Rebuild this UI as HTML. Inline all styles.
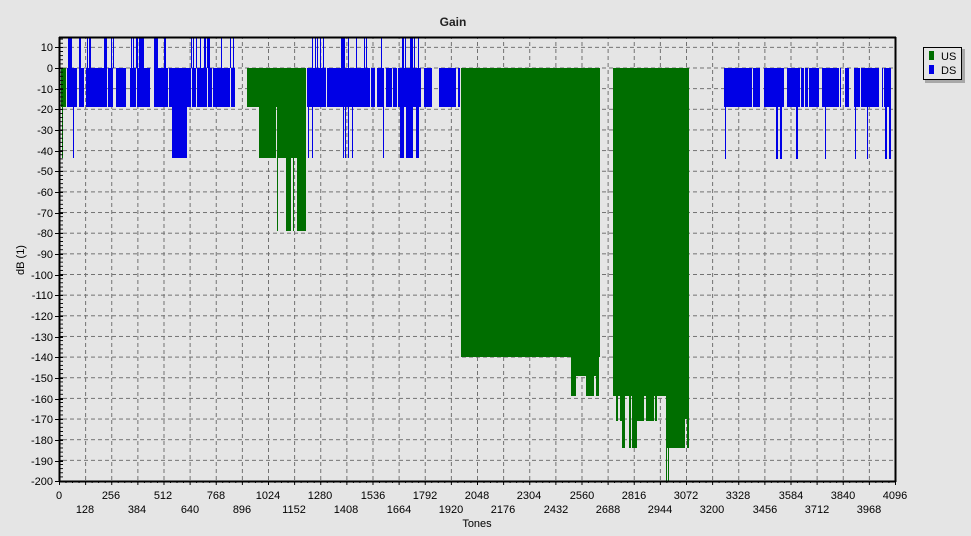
<!DOCTYPE html>
<html><head><meta charset="utf-8"><style>
html,body{margin:0;padding:0;background:#e5e5e5;width:971px;height:536px;overflow:hidden}
svg text{font-family:"Liberation Sans",sans-serif;font-size:11px;fill:#000}
</style></head><body>
<svg width="971" height="536" viewBox="0 0 971 536" xmlns="http://www.w3.org/2000/svg" shape-rendering="crispEdges">
<defs>
<pattern id="vg" x="59" y="0" width="26.125" height="536" patternUnits="userSpaceOnUse">
<line x1="0.5" y1="0" x2="0.5" y2="536" stroke="#707070" stroke-dasharray="4,3"/></pattern>
<pattern id="hg" x="0" y="-0.35" width="971" height="20.65" patternUnits="userSpaceOnUse">
<line x1="0" y1="6.5" x2="971" y2="6.5" stroke="#707070" stroke-dasharray="4,3"/></pattern>
<pattern id="xt" x="59" y="0" width="6.531" height="10" patternUnits="userSpaceOnUse">
<line x1="0.5" y1="0" x2="0.5" y2="3" stroke="#000"/></pattern>
<pattern id="xT" x="59" y="0" width="26.125" height="10" patternUnits="userSpaceOnUse">
<line x1="0.5" y1="0" x2="0.5" y2="5" stroke="#000"/></pattern>
<pattern id="yt" x="0" y="-0.35" width="10" height="4.13" patternUnits="userSpaceOnUse">
<line x1="0" y1="2.3" x2="3" y2="2.3" stroke="#000"/></pattern>
</defs>
<text x="453" y="26" text-anchor="middle" style="font-weight:bold;font-size:12px;fill:#222">Gain</text>
<rect x="60" y="38" width="835" height="443" fill="url(#vg)"/>
<rect x="60" y="38" width="835" height="443" fill="url(#hg)"/>
<g fill="#0000e6">
<!-- left blue bars -->
<rect x="67" y="68" width="10" height="39"/><rect x="79" y="68" width="5" height="39"/><rect x="86" y="68" width="3" height="39"/>
<rect x="89" y="68" width="18" height="39"/><rect x="108" y="68" width="5" height="39"/><rect x="116" y="68" width="10" height="39"/>
<rect x="130" y="68" width="6" height="39"/><rect x="137" y="68" width="13" height="39"/><rect x="154" y="68" width="14" height="39"/>
<rect x="169" y="68" width="18" height="39"/><rect x="187" y="68" width="4" height="39"/><rect x="192" y="68" width="4" height="39"/>
<rect x="197" y="68" width="10" height="39"/><rect x="208" y="68" width="4" height="39"/><rect x="213" y="68" width="17" height="39"/><rect x="231" y="68" width="4" height="39"/>
<rect x="172" y="107" width="15" height="51"/><rect x="73" y="107" width="1" height="51"/>
<!-- left spikes -->
<rect x="68" y="38" width="2" height="30"/><rect x="70" y="38" width="2" height="30"/><rect x="79" y="38" width="2" height="30"/>
<rect x="87" y="38" width="1" height="30"/><rect x="89" y="38" width="2" height="30"/><rect x="104" y="38" width="3" height="30"/>
<rect x="111" y="38" width="1" height="30"/><rect x="113" y="38" width="1" height="30"/><rect x="131" y="38" width="1" height="30"/><rect x="133" y="38" width="1" height="30"/>
<rect x="136" y="38" width="2" height="30"/><rect x="139" y="38" width="5" height="30"/><rect x="154" y="38" width="4" height="30"/>
<rect x="164" y="38" width="2" height="30"/><rect x="191" y="38" width="1" height="30"/><rect x="193" y="38" width="1" height="30"/>
<rect x="196" y="38" width="1" height="30"/><rect x="200" y="38" width="1" height="30"/><rect x="204" y="38" width="2" height="30"/><rect x="207" y="38" width="3" height="30"/>
<rect x="221" y="38" width="1" height="30"/><rect x="230" y="38" width="1" height="30"/><rect x="233" y="38" width="1" height="30"/>
<!-- middle blue -->
<rect x="307" y="68" width="19" height="39"/><rect x="327" y="68" width="43" height="39"/><rect x="371" y="68" width="4" height="39"/>
<rect x="377" y="68" width="7" height="39"/><rect x="386" y="68" width="6" height="39"/><rect x="393" y="68" width="4" height="39"/>
<rect x="398" y="68" width="23" height="39"/><rect x="424" y="68" width="8" height="39"/><rect x="439" y="68" width="17" height="39"/><rect x="458" y="68" width="2" height="39"/>
<rect x="312" y="38" width="1" height="30"/><rect x="315" y="38" width="1" height="30"/><rect x="317" y="38" width="1" height="30"/>
<rect x="320" y="38" width="1" height="30"/><rect x="323" y="38" width="1" height="30"/><rect x="341" y="38" width="4" height="30"/>
<rect x="348" y="38" width="1" height="30"/><rect x="356" y="38" width="1" height="30"/><rect x="364" y="38" width="1" height="30"/><rect x="366" y="38" width="1" height="30"/>
<rect x="381" y="38" width="1" height="30"/><rect x="402" y="38" width="2" height="30"/><rect x="405" y="38" width="1" height="30"/>
<rect x="410" y="38" width="3" height="30"/><rect x="414" y="38" width="1" height="30"/><rect x="418" y="38" width="1" height="30"/>
<rect x="308" y="107" width="1" height="51"/><rect x="312" y="107" width="1" height="51"/><rect x="343" y="107" width="1" height="51"/>
<rect x="345" y="107" width="1" height="51"/><rect x="348" y="107" width="1" height="51"/><rect x="352" y="107" width="1" height="51"/>
<rect x="383" y="107" width="1" height="51"/><rect x="400" y="107" width="4" height="51"/><rect x="406" y="107" width="7" height="51"/><rect x="416" y="107" width="3" height="51"/>
<!-- right blue -->
<rect x="724" y="68" width="28" height="39"/><rect x="753" y="68" width="7" height="39"/><rect x="764" y="68" width="20" height="39"/>
<rect x="787" y="68" width="13" height="39"/><rect x="801" y="68" width="3" height="39"/><rect x="805" y="68" width="3" height="39"/>
<rect x="809" y="68" width="10" height="39"/><rect x="822" y="68" width="17" height="39"/><rect x="840" y="68" width="1" height="39"/>
<rect x="845" y="68" width="4" height="39"/><rect x="854" y="68" width="6" height="39"/><rect x="861" y="68" width="18" height="39"/>
<rect x="882" y="68" width="1" height="39"/><rect x="884" y="68" width="7" height="39"/>
<rect x="725" y="107" width="1" height="52"/><rect x="776" y="107" width="2" height="52"/><rect x="780" y="107" width="2" height="52"/>
<rect x="796" y="107" width="2" height="52"/><rect x="825" y="107" width="1" height="52"/><rect x="855" y="107" width="1" height="52"/>
<rect x="867" y="107" width="1" height="52"/><rect x="885" y="107" width="2" height="52"/><rect x="889" y="107" width="2" height="52"/>
</g>
<g fill="#006e00">
<rect x="61" y="68" width="5" height="39"/><rect x="62" y="107" width="1" height="51"/>
<rect x="247" y="68" width="59" height="39"/><rect x="259" y="107" width="17" height="51"/><rect x="277" y="107" width="29" height="51"/>
<rect x="277" y="158" width="1" height="73"/><rect x="286" y="158" width="5" height="73"/><rect x="293" y="158" width="1" height="73"/><rect x="297" y="158" width="9" height="73"/>
<rect x="461" y="68" width="139" height="289"/><rect x="571" y="357" width="28" height="19"/>
<rect x="571" y="376" width="5" height="20"/><rect x="586" y="376" width="8" height="20"/><rect x="596" y="376" width="3" height="20"/>
<rect x="613" y="68" width="76" height="289"/><rect x="613" y="357" width="76" height="39"/>
<rect x="616" y="396" width="2" height="25"/><rect x="620" y="396" width="5" height="25"/><rect x="622" y="421" width="3" height="27"/>
<rect x="629" y="396" width="2" height="52"/><rect x="632" y="396" width="12" height="25"/><rect x="632" y="421" width="5" height="27"/>
<rect x="646" y="396" width="8" height="25"/><rect x="655" y="396" width="2" height="25"/><rect x="666" y="396" width="23" height="23"/>
<rect x="666" y="396" width="19" height="52"/><rect x="666" y="448" width="1" height="33"/><rect x="668" y="448" width="1" height="33"/><rect x="687" y="419" width="2" height="29"/>
</g>
<!-- ticks -->
<rect x="60" y="481" width="835" height="4" fill="url(#xt)"/>
<rect x="59" y="481" width="837" height="6" fill="url(#xT)"/>
<rect x="60" y="38" width="4" height="443" fill="url(#yt)"/>
<g stroke="#000">
<path d="M55 47.5H63M55 68.5H63M55 89.5H63M55 109.5H63M55 130.5H63M55 151.5H63M55 171.5H63M55 192.5H63M55 213.5H63M55 233.5H63M55 254.5H63M55 275.5H63M55 295.5H63M55 316.5H63M55 337.5H63M55 357.5H63M55 378.5H63M55 399.5H63M55 419.5H63M55 440.5H63M55 461.5H63M55 481.5H63"/>
<rect x="59.5" y="37.5" width="836" height="444" fill="none" stroke-width="1"/>
<line x1="59" y1="37.5" x2="896" y2="37.5" stroke-width="2"/>
<line x1="59.5" y1="37" x2="59.5" y2="482" stroke-width="2"/>
<line x1="59" y1="481.5" x2="896" y2="481.5" stroke-width="2"/>
<line x1="895.5" y1="37" x2="895.5" y2="482" stroke-width="2"/>
</g>
<g text-anchor="end">
<text x="53" y="51">10</text><text x="53" y="72">0</text><text x="53" y="93">-10</text><text x="53" y="113">-20</text><text x="53" y="134">-30</text><text x="53" y="155">-40</text><text x="53" y="175">-50</text><text x="53" y="196">-60</text><text x="53" y="217">-70</text><text x="53" y="237">-80</text><text x="53" y="258">-90</text><text x="53" y="279">-100</text><text x="53" y="299">-110</text><text x="53" y="320">-120</text><text x="53" y="341">-130</text><text x="53" y="361">-140</text><text x="53" y="382">-150</text><text x="53" y="403">-160</text><text x="53" y="423">-170</text><text x="53" y="444">-180</text><text x="53" y="465">-190</text><text x="53" y="485">-200</text>
</g>
<g text-anchor="middle">
<text x="59" y="499">0</text><text x="111" y="499">256</text><text x="163" y="499">512</text><text x="216" y="499">768</text><text x="268" y="499">1024</text><text x="320" y="499">1280</text><text x="373" y="499">1536</text><text x="425" y="499">1792</text><text x="477" y="499">2048</text><text x="529" y="499">2304</text><text x="582" y="499">2560</text><text x="634" y="499">2816</text><text x="686" y="499">3072</text><text x="738" y="499">3328</text><text x="791" y="499">3584</text><text x="843" y="499">3840</text><text x="895" y="499">4096</text>
<text x="85" y="513">128</text><text x="137" y="513">384</text><text x="190" y="513">640</text><text x="242" y="513">896</text><text x="294" y="513">1152</text><text x="346" y="513">1408</text><text x="399" y="513">1664</text><text x="451" y="513">1920</text><text x="503" y="513">2176</text><text x="556" y="513">2432</text><text x="608" y="513">2688</text><text x="660" y="513">2944</text><text x="712" y="513">3200</text><text x="765" y="513">3456</text><text x="817" y="513">3712</text><text x="869" y="513">3968</text>
<text x="477" y="527">Tones</text>
<text x="0" y="0" transform="translate(24,260) rotate(-90)">dB (1)</text>
</g>
<!-- legend -->
<rect x="925" y="49" width="40" height="34" fill="#a8a8a8"/>
<rect x="923.5" y="47.5" width="38" height="32" fill="#e5e5e5" stroke="#000"/>
<rect x="929" y="51" width="5" height="9" fill="#006e00"/>
<rect x="929" y="65" width="5" height="9" fill="#0000e6"/>
<text x="941" y="60">US</text><text x="941" y="74">DS</text>
</svg>
</body></html>
